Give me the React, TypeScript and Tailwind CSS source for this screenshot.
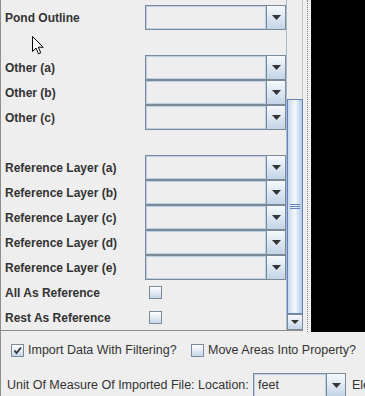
import React from "react";

// Rows of the scrolled layer panel: label plus either a combo, a checkbox or nothing
type Row = { label: string; kind: "combo" | "check" | "blank" };

const ROWS: Row[] = [
  { label: "Pond Outline", kind: "combo" },
  { label: "", kind: "blank" },
  { label: "Other (a)", kind: "combo" },
  { label: "Other (b)", kind: "combo" },
  { label: "Other (c)", kind: "combo" },
  { label: "", kind: "blank" },
  { label: "Reference Layer (a)", kind: "combo" },
  { label: "Reference Layer (b)", kind: "combo" },
  { label: "Reference Layer (c)", kind: "combo" },
  { label: "Reference Layer (d)", kind: "combo" },
  { label: "Reference Layer (e)", kind: "combo" },
  { label: "All As Reference", kind: "check" },
  { label: "Rest As Reference", kind: "check" },
];

// Metal style down arrow
function Arrow({ w = 9, h = 5 }: { w?: number; h?: number }) {
  return (
    <svg width={w} height={h} viewBox={`0 0 ${w} ${h}`}>
      <polygon points={`0,0 ${w},0 ${w / 2},${h}`} fill="#333333" />
    </svg>
  );
}

function Combo({ value, width = "w-[141px]" }: { value?: string; width?: string }) {
  return (
    <div className={`flex h-[25px] shrink-0 border border-[#7a8a99] ${width}`}>
      <div className="flex flex-1 items-center border border-[#b8cfe5] bg-[#eeeeee] pl-[3px]">
        {value}
      </div>
      <div className="flex w-[19px] items-center justify-center border-l border-[#7a8a99] bg-gradient-to-b from-[#f6f9fc] to-[#c3d4e7]">
        <Arrow />
      </div>
    </div>
  );
}

function Check({ checked = false }: { checked?: boolean }) {
  return (
    <div className="flex h-[13px] w-[13px] shrink-0 items-center justify-center border border-[#7a8a99] bg-gradient-to-b from-white to-[#c6d6e9]">
      {checked && (
        <svg width="9" height="9" viewBox="0 0 9 9">
          <path d="M1.5 4.5 L3.5 7 L8 1.5" fill="none" stroke="#333333" strokeWidth="1.8" />
        </svg>
      )}
    </div>
  );
}

export default function App() {
  return (
    <div
      className="relative flex h-[396px] w-[365px] flex-col overflow-hidden border-l border-[#8e8e8e] bg-[#eeeeee] text-[12px] text-[#333333]"
      style={{ fontFamily: '"Liberation Sans", Arial, sans-serif' }}
    >
      {/* top: scroll pane, split divider, black panel */}
      <div className="flex h-[332px] items-start">
        <div className="flex h-[331px] border-b border-[#8e8e8e]">
          {/* viewport */}
          <div className="flex w-[285px] flex-col pt-[5px] font-bold">
            {ROWS.map((r, i) => (
              <div key={i} className="flex h-[25px] items-center">
                <div className="w-[144px] shrink-0 pl-[4px]">{r.label}</div>
                {r.kind === "combo" && <Combo />}
                {r.kind === "check" && (
                  <div className="pl-[4px]">
                    <Check />
                  </div>
                )}
              </div>
            ))}
          </div>

          {/* vertical scrollbar */}
          <div className="flex w-[17px] flex-col border-l border-[#a9b9c9] bg-[#eeeeee]">
            <div className="h-[99px] border-r border-[#c8c8c8]" />
            <div className="flex h-[215px] items-center justify-center border border-[#6382bf] bg-gradient-to-r from-[#c9d9ec] via-[#f4f8fc] to-[#b3c8e2]">
              <div className="flex w-[10px] flex-col gap-[1px]">
                <div className="h-px bg-[#6382bf]" />
                <div className="h-px bg-[#6382bf]" />
                <div className="h-px bg-[#6382bf]" />
              </div>
            </div>
            <div className="flex h-[16px] items-center justify-center border border-[#7a8a99] bg-gradient-to-b from-[#f6f9fc] to-[#c3d4e7]">
              <Arrow w={8} h={4} />
            </div>
          </div>
        </div>

        {/* split pane divider */}
        <div className="flex h-[332px] w-[8px] justify-center bg-[#eeeeee]">
          <div className="h-full border-l border-dotted border-[#8a8a8a]" />
        </div>
        <div className="h-[332px] flex-1 bg-black" />
      </div>

      {/* bottom options */}
      <div className="flex flex-col pt-[12px] text-[12.5px]">
        <div className="flex h-[13px] items-center">
          <div className="flex w-[190px] items-center gap-[4px] pl-[10px]">
            <Check checked />
            <span className="whitespace-nowrap">Import Data With Filtering?</span>
          </div>
          <div className="flex items-center gap-[4px]">
            <Check />
            <span className="whitespace-nowrap">Move Areas Into Property?</span>
          </div>
        </div>
        <div className="mt-[16px] flex h-[25px] items-center whitespace-nowrap">
          <div className="w-[252px] shrink-0 pl-[6px]">Unit Of Measure Of Imported File: Location:</div>
          <Combo value="feet" width="w-[93px]" />
          <span className="pl-[6px]">Ele</span>
        </div>
      </div>

      {/* mouse pointer */}
      <svg className="absolute left-[31px] top-[36px]" width="13" height="20" viewBox="0 0 13 20">
        <path
          d="M0.5 0.5 L0.5 15.5 L4 12 L6.5 17.8 L8.8 16.8 L6.3 11.2 L11.2 11.2 Z"
          fill="#ffffff"
          stroke="#000000"
          strokeWidth="1"
        />
      </svg>
    </div>
  );
}
